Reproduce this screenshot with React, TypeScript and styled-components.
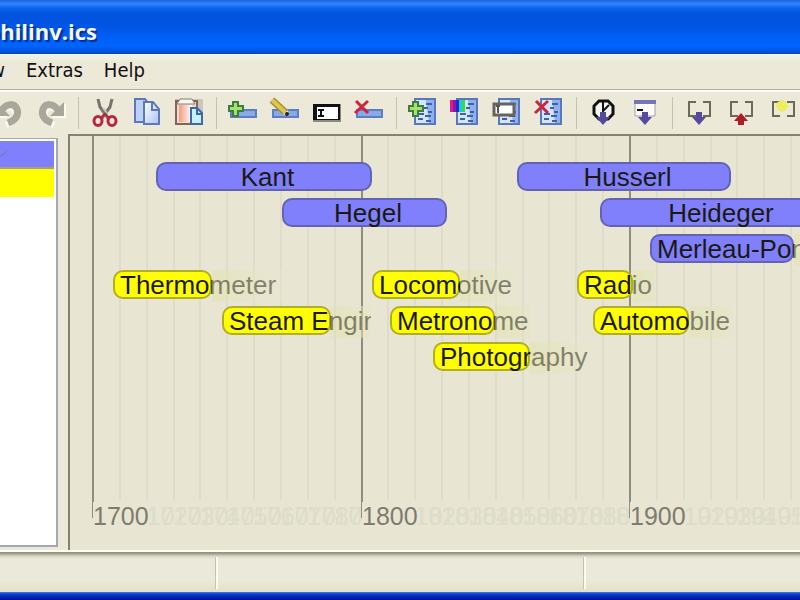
import React from "react";
import styled, { createGlobalStyle, css } from "styled-components";

const GlobalStyle = createGlobalStyle`
  * { box-sizing: border-box; }
  html, body, #root { height: 100%; }
  body { margin: 0; overflow: hidden; font-family: "Liberation Sans", Arial, sans-serif; }
  button { border: 0; padding: 0; background: none; font: inherit; color: inherit; }
`;

const Window = styled.div`
  display: flex;
  flex-direction: column;
  height: 100vh;
  background: #ece9d8;
  overflow: hidden;
`;

const TitleBar = styled.header`
  display: flex;
  align-items: center;
  flex: none;
  height: 54px;
  padding-top: 8px;
  background: linear-gradient(
    #1a63e6 0, #2f86fa 4px, #0c63ee 8px, #0053de 14px, #0055e2 26px,
    #0060f8 38px, #0064ff 46px, #0055e0 51px, #0a43b4 54px
  );
`;

const Title = styled.h1`
  display: flex;
  justify-content: flex-end;
  width: 97px;
  margin: 0;
  overflow: hidden;
  white-space: nowrap;
  color: #f4f7ff;
  font: bold 22px/32px "Open Sans", "Noto Sans", sans-serif;
  text-shadow: 2px 2px 1px #0a2f8c;
`;

const MenuBar = styled.nav`
  display: flex;
  align-items: center;
  flex: none;
  gap: 21px;
  height: 36px;
  padding-bottom: 4px;
  background: linear-gradient(#f4f3ea, #ece9d8 8px);
  border-bottom: 1px solid #b4b1a0;
  font: 20px/28px "DejaVu Sans Condensed", "DejaVu Sans", sans-serif;
  font-stretch: condensed;
  color: #111;
`;

const MenuItem = styled.button<{ $clipped?: boolean }>`
  ${(p) =>
    p.$clipped &&
    css`
      display: flex;
      justify-content: flex-end;
      width: 5px;
      overflow: hidden;
    `}
`;

const ToolBar = styled.div`
  display: flex;
  align-items: center;
  flex: none;
  height: 44px;
  overflow: hidden;
  border-top: 2px solid #fbfaf4;
`;

const ToolGroup = styled.div<{ $lead: number }>`
  display: flex;
  flex: none;
  gap: 10px;
  padding: 0 11px 0 ${(p) => p.$lead}px;
  & + & { border-left: 1px solid #c6c3b2; }
`;

const Tool = styled.button`
  display: block;
  width: 32px;
  height: 32px;
  svg { display: block; }
`;

const Body = styled.main`
  display: flex;
  flex: 1;
  min-height: 0;
`;

const Sidebar = styled.ul`
  flex: none;
  width: 58px;
  margin: 4px 10px 3px 0;
  padding: 2px 2px 0 0;
  list-style: none;
  background: #fff;
  border: solid #a3a7b2;
  border-width: 1px 2px 2px 0;
`;

const Category = styled.li<{ $color: string }>`
  height: 28px;
  background: ${(p) => p.$color};
  border-bottom: 2px solid #a0a090;
  & + & { border-bottom-color: ${(p) => p.$color}; }
  svg { display: block; }
`;

const Canvas = styled.section`
  position: relative;
  flex: 1;
  min-width: 0;
  overflow: hidden;
  padding-top: 26px;
  background: #e8e6d3;
  border: solid #85836f;
  border-width: 2px 0 0 2px;
`;

const GridLine = styled.div<{ $x: number; $major: boolean }>`
  position: absolute;
  top: 0;
  left: ${(p) => p.$x}px;
  bottom: ${(p) => (p.$major ? 32 : 50)}px;
  width: 2px;
  background: ${(p) => (p.$major ? "#8f8e7e" : "#dedcca")};
`;

const YearLabel = styled.span<{ $x: number; $major: boolean }>`
  position: absolute;
  bottom: 20px;
  left: ${(p) => p.$x + (p.$major ? 1 : 0)}px;
  z-index: ${(p) => (p.$major ? 1 : 0)};
  font-size: 25px;
  line-height: 28px;
  color: ${(p) => (p.$major ? "#7d7c6f" : "#dedcca")};
  background: ${(p) => (p.$major ? "#e8e6d3" : "transparent")};
`;

const Lane = styled.div`
  position: relative;
  height: 36px;
`;

const Event = styled.div<{ $x: number; $w: number }>`
  position: absolute;
  left: ${(p) => p.$x}px;
  width: ${(p) => p.$w}px;
  height: 32px;
  overflow: hidden;
`;

const Bar = styled.div<{ $w: number; $kind: Kind }>`
  width: ${(p) => p.$w}px;
  height: 29px;
  border: 2px solid ${(p) => (p.$kind === "person" ? "#6362b4" : "#b0ae22")};
  border-radius: 10px;
  background: ${(p) => (p.$kind === "person" ? "#8080fc" : "#ffff00")};
`;

const EventLabel = styled.span<{ $w: number; $center: boolean }>`
  position: absolute;
  top: 0;
  left: 0;
  width: ${(p) => (p.$center ? `${p.$w}px` : "auto")};
  padding-left: 7px;
  text-align: ${(p) => (p.$center ? "center" : "left")};
  font-size: 26px;
  line-height: 30px;
  white-space: nowrap;
  color: #1a1a12;
`;

const Fade = styled.div<{ $from: number }>`
  position: absolute;
  top: 0;
  bottom: 0;
  left: ${(p) => p.$from}px;
  right: 0;
  background: linear-gradient(90deg, rgba(226, 226, 172, 0.5), rgba(232, 230, 205, 0.5) 60px);
`;

const StatusBar = styled.footer`
  display: grid;
  grid-template-columns: 216px 368px 1fr;
  flex: none;
  height: 42px;
  padding: 5px 0 3px;
  border-top: 2px solid #fdfdf4;
  background: linear-gradient(#8f8d7c 0, #a5a392 2px, #d6d4c3 4px, #ebe9d9 7px, #ebe9d8 28px, #e4e0ca);
`;

const StatusCell = styled.div`
  & + & { border-left: 2px solid #fbfaf0; }
  &:not(:last-child) { border-right: 1px solid #c5c3b2; }
`;

const Frame = styled.div`
  flex: none;
  height: 8px;
  background: linear-gradient(#4b7ee0, #0b3fd0 2px, #0022b8 5px, #00128c);
`;

type Kind = "person" | "invention";
interface Entry {
  name: string;
  x: number;
  bar: number;
  full?: number;
  kind: Kind;
}

const lanes: Entry[][] = [
  [
    { name: "Kant", x: 86, bar: 216, kind: "person" },
    { name: "Husserl", x: 447, bar: 214, kind: "person" },
  ],
  [
    { name: "Hegel", x: 212, bar: 165, kind: "person" },
    { name: "Heideger", x: 530, bar: 235, kind: "person" },
  ],
  [{ name: "Merleau-Ponty", x: 580, bar: 144, full: 180, kind: "person" }],
  [
    { name: "Thermometer", x: 43, bar: 99, full: 170, kind: "invention" },
    { name: "Locomotive", x: 302, bar: 88, full: 144, kind: "invention" },
    { name: "Radio", x: 507, bar: 56, full: 78, kind: "invention" },
  ],
  [
    { name: "Steam Engine", x: 152, bar: 109, full: 149, kind: "invention" },
    { name: "Metronome", x: 320, bar: 105, full: 140, kind: "invention" },
    { name: "Automobile", x: 523, bar: 96, full: 140, kind: "invention" },
  ],
  [{ name: "Photography", x: 363, bar: 97, full: 157, kind: "invention" }],
];

const decades = Array.from({ length: 30 }, (_, i) => ({
  year: 1700 + i * 10,
  x: 22 + Math.round(i * 26.85),
  major: i % 10 === 0,
}));

const Icon = ({ children }: { children: React.ReactNode }) => (
  <svg width="32" height="32" viewBox="0 0 32 32" fill="none" aria-hidden="true">
    {children}
  </svg>
);

const Redo = () => (
  <>
    <path d="M18 27C10 24 7 19 9 13c3-5 9-5 14 1" stroke="#fbfaf2" strokeWidth="6" transform="translate(1 1)" />
    <path d="M30 7v13H18" stroke="#fbfaf2" strokeWidth="2" />
    <path d="M17 26C9 23 6 18 8 12c3-6 10-6 15 1" stroke="#a9a799" strokeWidth="7" />
    <path d="M29 5v14H15z" fill="#a9a799" />
  </>
);

const Undo = () => (
  <g transform="translate(32 0) scale(-1 1)">
    <Redo />
  </g>
);

const Cut = () => (
  <>
    <path d="M9 2l2 8 8 11M23 2l-2 8-8 11" stroke="#77736e" strokeWidth="3" />
    <path d="M14 11l4 5" stroke="#c9c5bd" strokeWidth="2" />
    <ellipse cx="9" cy="24" rx="4" ry="4.5" stroke="#b5283f" strokeWidth="3" />
    <ellipse cx="23" cy="24" rx="4" ry="4.5" stroke="#b5283f" strokeWidth="3" />
    <path d="M12 21l4-4 4 4" stroke="#b5283f" strokeWidth="2" />
  </>
);

const Copy = () => (
  <>
    <defs>
      <linearGradient id="sheet" x1="0" y1="0" x2="1" y2="1">
        <stop offset="0" stopColor="#fff" />
        <stop offset="1" stopColor="#a9c4f3" />
      </linearGradient>
    </defs>
    <path d="M4 2h10l4 5v18H4z" fill="#bdd1f7" stroke="#5c78bd" strokeWidth="2" />
    <path d="M13 5h9l6 7v15H13z" fill="url(#sheet)" stroke="#5c78bd" strokeWidth="2" />
    <path d="M21 5v8h7" stroke="#5c78bd" strokeWidth="2" />
  </>
);

const Paste = () => (
  <>
    <defs>
      <linearGradient id="board" x1="0" x2="1">
        <stop offset="0" stopColor="#f29b80" />
        <stop offset="1" stopColor="#fff" />
      </linearGradient>
    </defs>
    <path d="M2 2h28v25H2z" fill="#c9c7bc" />
    <path d="M3 4h21v23H3z" fill="#e9dcd2" stroke="#8a6254" strokeWidth="2" />
    <path d="M6 8h13v17H6z" fill="url(#board)" />
    <path d="M7 2h12l3 5H4z" fill="#f8f6ef" stroke="#827e77" strokeWidth="1" />
    <path d="M18 11h6l5 5v11H18z" fill="#c9f1ff" stroke="#3d69a8" strokeWidth="2" />
    <path d="M24 11v6h5" stroke="#3d69a8" strokeWidth="2" />
  </>
);

const Slab = () => <path d="M4 13h25v7H4z" fill="#8aa9e8" stroke="#5c7fc4" strokeWidth="2" />;

const Plus = () => (
  <path d="M6 5h5v4h5v5h-5v5H6v-5H2V9h4z" fill="#a6e26a" stroke="#3d7d43" strokeWidth="2" />
);

const Cross = () => <path d="M3 4l12 12M15 4L2 16" stroke="#cf2439" strokeWidth="3" />;

const AddBar = () => (<><Slab /><Plus /></>);

const EditBar = () => (
  <>
    <Slab />
    <path d="M3 3l13 12" stroke="#a58c32" strokeWidth="7" />
    <path d="M3 3l13 12" stroke="#dcc64d" strokeWidth="4" />
    <path d="M14 17l5-4 1 6z" fill="#f2dfa5" />
    <circle cx="18" cy="17" r="2" fill="#222" />
  </>
);

const RenameBar = () => (
  <>
    <path d="M2 7h28v18H2z" fill="#8d8b80" />
    <path d="M2 7h27v16H2z" fill="#111" />
    <path d="M6 10h21v12H6z" fill="#fff" />
    <path d="M7 13h6M7 19h6M10 13v6" stroke="#111" strokeWidth="2" />
  </>
);

const DeleteBar = () => (<><Slab /><Cross /></>);

const Doc = () => (
  <>
    <path d="M8 2h20v25H8z" fill="#d5e4ff" stroke="#5878bd" strokeWidth="2" />
    <path d="M19 3h8v23h-5z" fill="#8eb0ee" />
    <path d="M19 7h6M17 11h4M21 15h4M11 17h6M18 19h6M11 22h5M19 24h5" stroke="#3d60a8" strokeWidth="2" />
  </>
);

const AddDoc = () => (<><Doc /><Plus /></>);

const ColorDoc = () => (
  <>
    <Doc />
    <path d="M1 3h4v12H1z" fill="#e01a8c" />
    <path d="M4 3h3v12H4z" fill="#8c18a8" />
    <path d="M7 3h4v12H7z" fill="#2324d6" />
    <path d="M10 3h3v12h-3z" fill="#20c6e8" />
    <path d="M13 3h3v12h-3z" fill="#2de23c" />
  </>
);

const RenameDoc = () => (
  <>
    <Doc />
    <path d="M3 7h20v11H3z" fill="#fff" stroke="#66645e" strokeWidth="3" />
    <path d="M7 9v7M5 9h4" stroke="#555" strokeWidth="2" />
  </>
);

const DeleteDoc = () => (<><Doc /><Cross /></>);

const Down = () => <path d="M13 15h6v5h4l-7 8-7-8h4z" fill="#554a9e" />;

const ClockDown = () => (
  <>
    <path d="M12 4h9l5 5v8l-5 5h-9l-5-5V9z" fill="#f6f5ef" stroke="#111" strokeWidth="3" />
    <path d="M16 4v10l6-6" stroke="#111" strokeWidth="2" />
    <Down />
  </>
);

const WindowDown = () => (
  <>
    <path d="M6 4h20v15H6z" fill="#fafaf7" stroke="#a09fb5" />
    <path d="M5 3h22v4H5z" fill="#7674b8" />
    <path d="M8 13h6" stroke="#111" strokeWidth="2" />
    <Down />
  </>
);

const Brackets = () => (
  <path d="M13 5H6v14h7M20 5h7v14h-7" stroke="#6d6a58" strokeWidth="2" />
);

const BracketDown = () => (<><Brackets /><Down /></>);

const BracketUp = () => (
  <>
    <Brackets />
    <path d="M13 28h6v-4h4l-7-8-7 8h4z" fill="#b01c25" />
  </>
);

const BracketNew = () => (
  <>
    <Brackets />
    <path d="M15 3v12M9 9h12M11 5l8 8M19 5l-8 8" stroke="#ecee58" strokeWidth="3" />
  </>
);

const groups: { lead: number; tools: [string, React.FC][] }[] = [
  { lead: 0, tools: [["Redo", Redo]] },
  { lead: 10, tools: [["Cut", Cut], ["Copy", Copy], ["Paste", Paste]] },
  { lead: 10, tools: [["Add event", AddBar], ["Edit event", EditBar], ["Rename event", RenameBar], ["Delete event", DeleteBar]] },
  { lead: 10, tools: [["Add category", AddDoc], ["Color category", ColorDoc], ["Rename category", RenameDoc], ["Delete category", DeleteDoc]] },
  { lead: 10, tools: [["Go to time", ClockDown], ["Go to event", WindowDown]] },
  { lead: 10, tools: [["Move in", BracketDown], ["Move out", BracketUp], ["New range", BracketNew]] },
];

const ClippedTool = styled(Tool)`
  display: flex;
  justify-content: flex-end;
  flex: none;
  width: 25px;
  margin-right: 10px;
  overflow: hidden;
  svg { flex: none; }
`;

export default function App() {
  return (
    <>
      <GlobalStyle />
      <Window>
        <TitleBar>
          <Title>philinv.ics</Title>
        </TitleBar>
        <MenuBar>
          <MenuItem $clipped>View</MenuItem>
          <MenuItem>Extras</MenuItem>
          <MenuItem>Help</MenuItem>
        </MenuBar>
        <ToolBar>
          <ClippedTool aria-label="Undo"><Icon><Undo /></Icon></ClippedTool>
          {groups.map((g, i) => (
            <ToolGroup key={i} $lead={g.lead}>
              {g.tools.map(([label, Glyph]) => (
                <Tool key={label} aria-label={label}><Icon><Glyph /></Icon></Tool>
              ))}
            </ToolGroup>
          ))}
        </ToolBar>
        <Body>
          <Sidebar>
            <Category $color="#8080fc">
              <svg width="12" height="26" aria-hidden="true">
                <path d="M0 15l3-1 4-4" stroke="#77779e" strokeWidth="1" fill="none" />
              </svg>
            </Category>
            <Category $color="#ffff00" />
          </Sidebar>
          <Canvas>
            {decades.map((d) => (
              <React.Fragment key={d.year}>
                <GridLine $x={d.x} $major={d.major} />
                <YearLabel $x={d.x} $major={d.major}>{d.year}</YearLabel>
              </React.Fragment>
            ))}
            {lanes.map((lane, i) => (
              <Lane key={i}>
                {lane.map((e) => (
                  <Event key={e.name} $x={e.x} $w={e.full ?? e.bar}>
                    <Bar $w={e.bar} $kind={e.kind} />
                    <EventLabel $w={e.bar} $center={!e.full}>{e.name}</EventLabel>
                    {e.full && <Fade $from={e.bar} />}
                  </Event>
                ))}
              </Lane>
            ))}
          </Canvas>
        </Body>
        <StatusBar>
          <StatusCell />
          <StatusCell />
          <StatusCell />
        </StatusBar>
        <Frame />
      </Window>
    </>
  );
}
